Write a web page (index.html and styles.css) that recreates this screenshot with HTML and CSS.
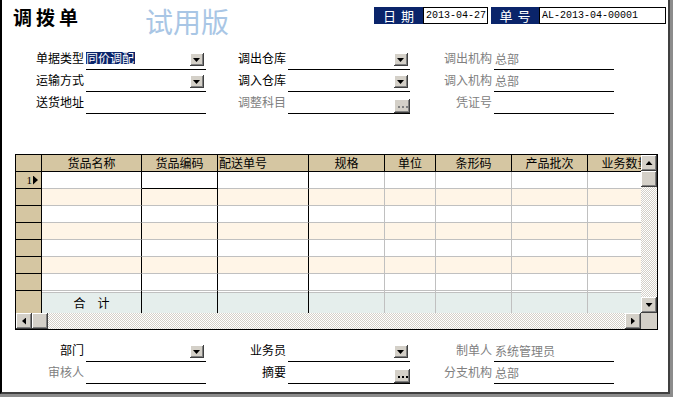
FILE: index.html
```html
<!DOCTYPE html>
<html lang="zh-CN">
<head>
    <meta charset="UTF-8">
    <title>调拨单</title>
    <link rel="stylesheet" href="styles.css">
</head>
<body>
    <div class="sheet">
        <div class="head">
            <div class="title">调拨单</div>
            <div class="trial">试用版</div>
            <div class="doc-info">
                <span class="tag">日 期</span><span class="box date">2013-04-27</span>
                <span class="tag no">单 号</span><span class="box num">AL-2013-04-00001</span>
            </div>
        </div>

        <div class="fields">
            <div class="lbl">单据类型</div>
            <div class="fld"><span class="sel">同价调配</span><span class="btn drop"></span></div>
            <div class="lbl">调出仓库</div>
            <div class="fld"><span class="btn drop"></span></div>
            <div class="lbl dim">调出机构</div>
            <div class="fld"><span class="val dim">总部</span></div>

            <div class="lbl">运输方式</div>
            <div class="fld"><span class="btn drop"></span></div>
            <div class="lbl">调入仓库</div>
            <div class="fld"><span class="btn drop"></span></div>
            <div class="lbl dim">调入机构</div>
            <div class="fld"><span class="val dim">总部</span></div>

            <div class="lbl">送货地址</div>
            <div class="fld"></div>
            <div class="lbl dim">调整科目</div>
            <div class="fld"><span class="btn more off"><svg width="16" height="14"><rect x="4" y="7" width="2" height="2"/><rect x="8" y="7" width="2" height="2"/><rect x="12" y="7" width="2" height="2"/></svg></span></div>
            <div class="lbl dim">凭证号</div>
            <div class="fld"></div>
        </div>

        <!-- 明细表格 -->
        <div class="grid-box">
            <div class="view">
                <div class="row cols">
                    <div class="g"></div>
                    <div class="c1">货品名称</div>
                    <div class="c2">货品编码</div>
                    <div class="c3 left">配送单号</div>
                    <div class="c4">规格</div>
                    <div class="c5">单位</div>
                    <div class="c6">条形码</div>
                    <div class="c7">产品批次</div>
                    <div class="c8">业务数量</div>
                </div>
                <div class="row">
                    <div class="g cur"><span>1</span><i class="pointer"></i></div>
                    <div class="c1"></div><div class="c2 focus"></div><div class="c3"></div><div class="c4"></div>
                    <div class="c5"></div><div class="c6"></div><div class="c7"></div><div class="c8"></div>
                </div>
                <div class="row alt">
                    <div class="g"></div>
                    <div class="c1"></div><div class="c2"></div><div class="c3"></div><div class="c4"></div>
                    <div class="c5"></div><div class="c6"></div><div class="c7"></div><div class="c8"></div>
                </div>
                <div class="row">
                    <div class="g"></div>
                    <div class="c1"></div><div class="c2"></div><div class="c3"></div><div class="c4"></div>
                    <div class="c5"></div><div class="c6"></div><div class="c7"></div><div class="c8"></div>
                </div>
                <div class="row alt">
                    <div class="g"></div>
                    <div class="c1"></div><div class="c2"></div><div class="c3"></div><div class="c4"></div>
                    <div class="c5"></div><div class="c6"></div><div class="c7"></div><div class="c8"></div>
                </div>
                <div class="row">
                    <div class="g"></div>
                    <div class="c1"></div><div class="c2"></div><div class="c3"></div><div class="c4"></div>
                    <div class="c5"></div><div class="c6"></div><div class="c7"></div><div class="c8"></div>
                </div>
                <div class="row alt">
                    <div class="g"></div>
                    <div class="c1"></div><div class="c2"></div><div class="c3"></div><div class="c4"></div>
                    <div class="c5"></div><div class="c6"></div><div class="c7"></div><div class="c8"></div>
                </div>
                <div class="row">
                    <div class="g"></div>
                    <div class="c1"></div><div class="c2"></div><div class="c3"></div><div class="c4"></div>
                    <div class="c5"></div><div class="c6"></div><div class="c7"></div><div class="c8"></div>
                </div>
                <div class="row total">
                    <div class="g"></div>
                    <div class="c1">合　计</div><div class="c2"></div><div class="c3"></div><div class="c4"></div>
                    <div class="c5"></div><div class="c6"></div><div class="c7"></div><div class="c8"></div>
                </div>
            </div>
            <div class="vbar">
                <span class="sb up"></span>
                <span class="sb"></span>
                <span class="track"></span>
                <span class="sb down"></span>
            </div>
            <div class="hbar">
                <span class="sb left"></span>
                <span class="sb"></span>
                <span class="track"></span>
                <span class="sb right"></span>
            </div>
            <div class="corner"></div>
        </div>

        <div class="fields bottom">
            <div class="lbl">部门</div>
            <div class="fld"><span class="btn drop"></span></div>
            <div class="lbl">业务员</div>
            <div class="fld"><span class="btn drop"></span></div>
            <div class="lbl dim">制单人</div>
            <div class="fld"><span class="val dim">系统管理员</span></div>

            <div class="lbl dim">审核人</div>
            <div class="fld"></div>
            <div class="lbl">摘要</div>
            <div class="fld"><span class="btn more"><svg width="16" height="14"><rect x="4" y="7" width="2" height="2"/><rect x="8" y="7" width="2" height="2"/><rect x="12" y="7" width="2" height="2"/></svg></span></div>
            <div class="lbl dim">分支机构</div>
            <div class="fld"><span class="val dim">总部</span></div>
        </div>
    </div>
</body>
</html>
```

FILE: styles.css
```css
body {
    margin: 0;
    background-color: #8c8c8c;
    font-family: "Noto Sans CJK SC", "Liberation Sans", sans-serif;
    font-size: 12px;
    color: #000;
}

.sheet {
    width: 666px;
    height: 392px;
    background-color: #fff;
    border-left: 2px solid #000;
    border-right: 2px solid #404040;
    border-bottom: 2px solid #404040;
    overflow: hidden;
}

/* 标题栏 */
.head {
    display: flex;
    align-items: flex-start;
    height: 48px;
    box-sizing: border-box;
    padding: 7px 2px 0 11px;
}

.title {
    font-size: 19px;
    font-weight: bold;
    letter-spacing: 4px;
    line-height: 20px;
}

.trial {
    margin-left: 63px;
    font-size: 28px;
    line-height: 28px;
    color: #a9c6e5;
}

.doc-info {
    margin-left: auto;
    display: flex;
    height: 17px;
}

.tag {
    width: 49px;
    background-color: #0a246a;
    color: #fff;
    font-size: 13px;
    line-height: 17px;
    text-align: center;
    word-spacing: 2px;
}

.tag.no {
    width: 48px;
    margin-left: 3px;
}

.box {
    box-sizing: border-box;
    border: 1px solid #000;
    font-family: "Liberation Mono", monospace;
    font-size: 10px;
    line-height: 15px;
    padding-left: 2px;
}

.date { width: 65px; }
.num { width: 127px; }

/* 表头字段 */
.fields {
    display: grid;
    grid-template-columns: 84px 120px 82px 122px 84px 120px;
    grid-auto-rows: 22px;
}

.fields.bottom {
    margin-top: 10px;
}

.lbl {
    text-align: right;
    padding: 3px 2px 0 0;
    line-height: 14px;
    white-space: nowrap;
}

.dim { color: #808080; }

.fld {
    display: flex;
    align-items: flex-end;
    box-sizing: border-box;
    border-bottom: 1px solid #000;
    padding: 0 2px 3px 0;
}

.val {
    line-height: 14px;
    padding-left: 1px;
}

.sel {
    background-color: #0a246a;
    color: #fff;
    line-height: 12px;
    margin-bottom: 2px;
    padding-right: 1px;
}

.btn {
    margin-left: auto;
    box-sizing: border-box;
    background-color: #d4d0c8;
    box-shadow: inset -1px -1px #404040, inset 1px 1px #fff, inset -2px -2px #808080;
    display: flex;
    align-items: center;
    justify-content: center;
}

.drop {
    width: 14px;
    height: 13px;
}

.drop::after {
    content: "";
    width: 7px;
    height: 4px;
    margin: 1px 1px 0 0;
    background-color: #000;
    clip-path: polygon(0 0, 100% 0, 50% 100%);
}

.more {
    width: 16px;
    height: 14px;
    margin: 0 -2px -3px auto;
}

.more svg { fill: #000; }
.more.off svg { fill: #808080; }

/* 明细表格 */
.grid-box {
    margin: 40px 0 0 13px;
    width: 641px;
    display: grid;
    grid-template-columns: 625px 16px;
    grid-template-rows: 158px 16px;
    border: 1px solid #000;
}

.view {
    overflow: hidden;
}

.row {
    display: flex;
    height: 17px;
    background-color: #fff;
}

.row.alt { background-color: #fff5e7; }

.row > div {
    flex: none;
    box-sizing: border-box;
    height: 100%;
    border-right: 1px solid #c0c0c0;
    border-bottom: 1px solid #c0c0c0;
}

.row .g {
    width: 26px;
    background-color: #d5c6a2;
    border-color: #000;
}

.row .c1 { width: 100px; border-right-color: #000; }
.row .c2 { width: 76px; border-right-color: #000; }
.row .c3 { width: 91px; border-right-color: #000; }
.row .c4 { width: 76px; }
.row .c5 { width: 51px; }
.row .c6 { width: 76px; }
.row .c7 { width: 76px; }
.row .c8 { width: 76px; }

.row .focus { border-bottom-color: #000; }

.row.cols > div {
    background-color: #d5c6a2;
    border-color: #000;
    text-align: center;
    line-height: 16px;
    white-space: nowrap;
}

.row.cols .left {
    text-align: left;
    padding-left: 1px;
}

.cur {
    display: flex;
    justify-content: flex-end;
    align-items: center;
    padding-right: 3px;
    font-family: "Liberation Serif", serif;
    font-size: 11px;
}

.pointer {
    width: 5px;
    height: 9px;
    margin-left: 1px;
    background-color: #000;
    clip-path: polygon(0 0, 100% 50%, 0 100%);
}

.row.total {
    height: 22px;
    background: linear-gradient(#fff 0 1px, #c0c0c0 1px 2px, #e5eeec 2px);
}

.row.total > div {
    border-bottom: none;
}

.row.total .c1 {
    text-align: center;
    line-height: 22px;
    font-size: 12px;
    padding-top: 1px;
}

/* 滚动条 */
.vbar, .hbar {
    display: flex;
}

.vbar { flex-direction: column; }

.sb {
    flex: none;
    width: 16px;
    height: 16px;
    box-sizing: border-box;
    background-color: #d4d0c8;
    box-shadow: inset -1px -1px #404040, inset 1px 1px #fff, inset -2px -2px #808080;
    display: flex;
    align-items: center;
    justify-content: center;
}

.track {
    flex: 1;
    background: repeating-conic-gradient(#d4d0c8 0 25%, #fff 0 50%) 0 0 / 2px 2px;
}

.sb.up::after, .sb.down::after {
    content: "";
    width: 7px;
    height: 4px;
    background-color: #000;
}

.sb.up::after { clip-path: polygon(50% 0, 100% 100%, 0 100%); }
.sb.down::after { clip-path: polygon(0 0, 100% 0, 50% 100%); }

.sb.left::after, .sb.right::after {
    content: "";
    width: 4px;
    height: 7px;
    background-color: #000;
}

.sb.left::after { clip-path: polygon(100% 0, 100% 100%, 0 50%); }
.sb.right::after { clip-path: polygon(0 0, 100% 50%, 0 100%); }

.corner {
    background-color: #d4d0c8;
}
```
